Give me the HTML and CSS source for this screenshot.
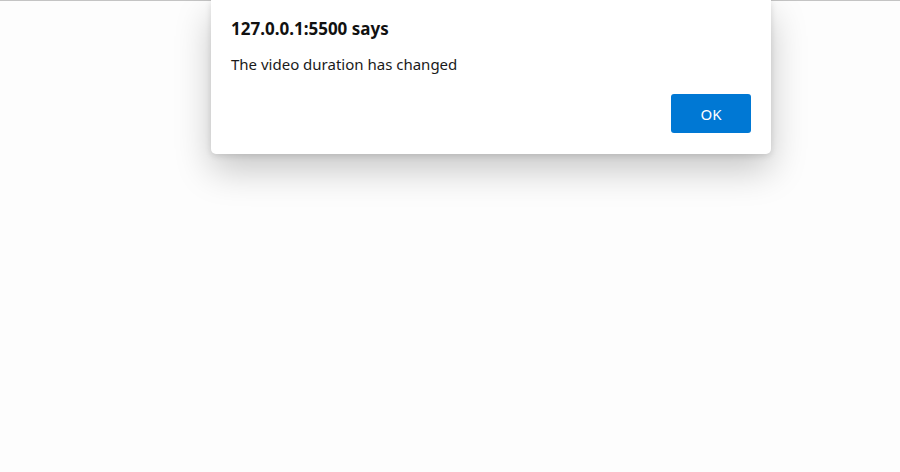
FILE: index.html
```html
<!DOCTYPE html>
<html lang="en">
<head>
    <meta charset="UTF-8">
    <meta name="viewport" content="width=device-width, initial-scale=1.0">
    <title>Video</title>
    <link rel="stylesheet" href="styles.css">
</head>
<body>
    <div class="top-line"></div>

    <div class="dialog" role="alertdialog">
        <h1 class="dialog-title">127.0.0.1:5500 says</h1>
        <p class="dialog-message">The video duration has changed</p>
        <div class="dialog-actions">
            <button class="dialog-ok">OK</button>
        </div>
    </div>
</body>
</html>
```

FILE: styles.css
```css
/* General */
body {
    font-family: "Noto Sans", "Open Sans", sans-serif;
    margin: 0;
    padding: 0;
    background-color: #fdfdfd;
    height: 472px;
    overflow: hidden;
}

.top-line {
    height: 1px;
    background-color: #c4c4c4;
}

/* Alert dialog */
.dialog {
    position: absolute;
    left: 211px;
    top: 0;
    width: 560px;
    box-sizing: border-box;
    padding: 17px 20px 21px 20px;
    background-color: #fff;
    border-radius: 0 0 5px 5px;
    box-shadow: 0 16px 36px rgba(0, 0, 0, 0.22), 0 2px 6px rgba(0, 0, 0, 0.12);
}

.dialog-title {
    margin: 0;
    font-size: 17px;
    font-weight: bold;
    color: #111;
    line-height: 24px;
}

.dialog-message {
    margin: 12px 0 0 0;
    font-size: 15px;
    color: #1a1a1a;
    line-height: 22px;
}

.dialog-actions {
    display: flex;
    justify-content: flex-end;
    margin-top: 19px;
}

.dialog-ok {
    width: 80px;
    height: 39px;
    border: none;
    border-radius: 3px;
    background-color: #0078d4;
    color: #fff;
    font-family: inherit;
    font-size: 15px;
    cursor: pointer;
}
```
